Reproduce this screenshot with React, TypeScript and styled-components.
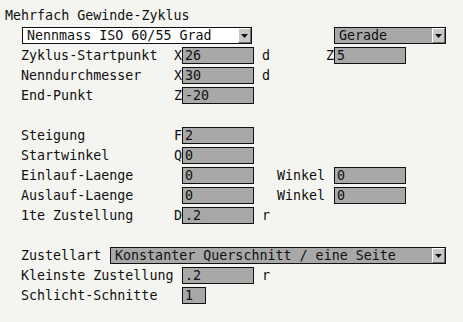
import React from "react";
import styled, { createGlobalStyle } from "styled-components";

const Global = createGlobalStyle`
  html, body { margin: 0; padding: 0; background: #f4f4f0; }
  body { width: 463px; height: 322px; overflow: hidden; }
`;

const Panel = styled.div`
  display: flex;
  flex-direction: column;
  gap: 3px;
  padding-top: 7px;
  font-family: "DejaVu Sans Mono", monospace;
  font-size: 13.33px;
  color: #111;
`;

const Title = styled.div`
  height: 17px;
  line-height: 17px;
  padding-left: 5px;
  white-space: pre;
`;

const Spacer = styled.div`
  height: 17px;
`;

const FormRow = styled.div`
  display: grid;
  grid-template-columns: 152px 9px 72px 23px 49px 8px 72px;
  align-items: center;
  height: 17px;
  line-height: 17px;
  padding-left: 21px;
  white-space: pre;
`;

const FreeRow = styled.div<{ $indent: number }>`
  display: flex;
  align-items: center;
  height: 17px;
  line-height: 17px;
  padding-left: ${(p) => p.$indent}px;
  white-space: pre;
`;

const Label = styled.span<{ $w?: number }>`
  ${(p) => (p.$w ? `width: ${p.$w}px; flex: none;` : "")}
`;

const Axis = styled.span`
  text-align: right;
`;

const Unit = styled.span`
  padding-left: 8px;
`;

const Field = styled.div<{ $w?: number }>`
  box-sizing: border-box;
  width: ${(p) => p.$w ?? 72}px;
  height: 17px;
  line-height: 15px;
  border: 1px solid #111;
  background: #a8a8a8;
  padding-left: 2px;
  overflow: hidden;
`;

const Select = styled.div<{ $w: number; $light?: boolean; $ml?: number }>`
  box-sizing: border-box;
  display: flex;
  align-items: center;
  flex: none;
  width: ${(p) => p.$w}px;
  height: 17px;
  margin-left: ${(p) => p.$ml ?? 0}px;
  border: 1px solid #111;
  background: ${(p) => (p.$light ? "#ffffff" : "#a8a8a8")};
`;

const SelectText = styled.span`
  flex: 1;
  padding-left: 4px;
  line-height: 15px;
  overflow: hidden;
`;

const ArrowButton = styled.span`
  box-sizing: border-box;
  display: flex;
  align-items: center;
  justify-content: center;
  width: 13px;
  height: 15px;
  background: #c8c8c8;
  border-top: 1px solid #ffffff;
  border-left: 1px solid #ffffff;
  border-right: 1px solid #707070;
  border-bottom: 1px solid #707070;
`;

const Arrow = () => (
  <svg width="7" height="4" viewBox="0 0 7 4">
    <polygon points="0,0 7,0 3.5,4" fill="#111" />
  </svg>
);

type RowProps = {
  label?: string;
  axis?: string;
  value?: string;
  fieldWidth?: number;
  unit?: string;
  label2?: string;
  axis2?: string;
  value2?: string;
};

const Row = ({ label, axis, value, fieldWidth, unit, label2, axis2, value2 }: RowProps) => (
  <FormRow>
    <Label>{label}</Label>
    <Axis>{axis}</Axis>
    {value !== undefined ? <Field $w={fieldWidth}>{value}</Field> : <span />}
    <Unit>{unit}</Unit>
    <Label>{label2}</Label>
    <Axis>{axis2}</Axis>
    {value2 !== undefined ? <Field>{value2}</Field> : <span />}
  </FormRow>
);

export default function App() {
  return (
    <>
      <Global />
      <Panel>
        <Title>Mehrfach Gewinde-Zyklus</Title>
        <FreeRow $indent={22}>
          <Select $w={230} $light>
            <SelectText>Nennmass ISO 60/55 Grad</SelectText>
            <ArrowButton>
              <Arrow />
            </ArrowButton>
          </Select>
          <Select $w={112} $ml={82}>
            <SelectText>Gerade</SelectText>
            <ArrowButton>
              <Arrow />
            </ArrowButton>
          </Select>
        </FreeRow>
        <Row label="Zyklus-Startpunkt" axis="X" value="26" unit="d" axis2="Z" value2="5" />
        <Row label="Nenndurchmesser" axis="X" value="30" unit="d" />
        <Row label="End-Punkt" axis="Z" value="-20" />
        <Spacer />
        <Row label="Steigung" axis="F" value="2" />
        <Row label="Startwinkel" axis="Q" value="0" />
        <Row label="Einlauf-Laenge" value="0" label2="Winkel" value2="0" />
        <Row label="Auslauf-Laenge" value="0" label2="Winkel" value2="0" />
        <Row label="1te Zustellung" axis="D" value=".2" unit="r" />
        <Spacer />
        <FreeRow $indent={21}>
          <Label $w={89}>Zustellart</Label>
          <Select $w={336}>
            <SelectText>Konstanter Querschnitt / eine Seite</SelectText>
            <ArrowButton>
              <Arrow />
            </ArrowButton>
          </Select>
        </FreeRow>
        <Row label="Kleinste Zustellung" value=".2" unit="r" />
        <Row label="Schlicht-Schnitte" value="1" fieldWidth={24} />
      </Panel>
    </>
  );
}
